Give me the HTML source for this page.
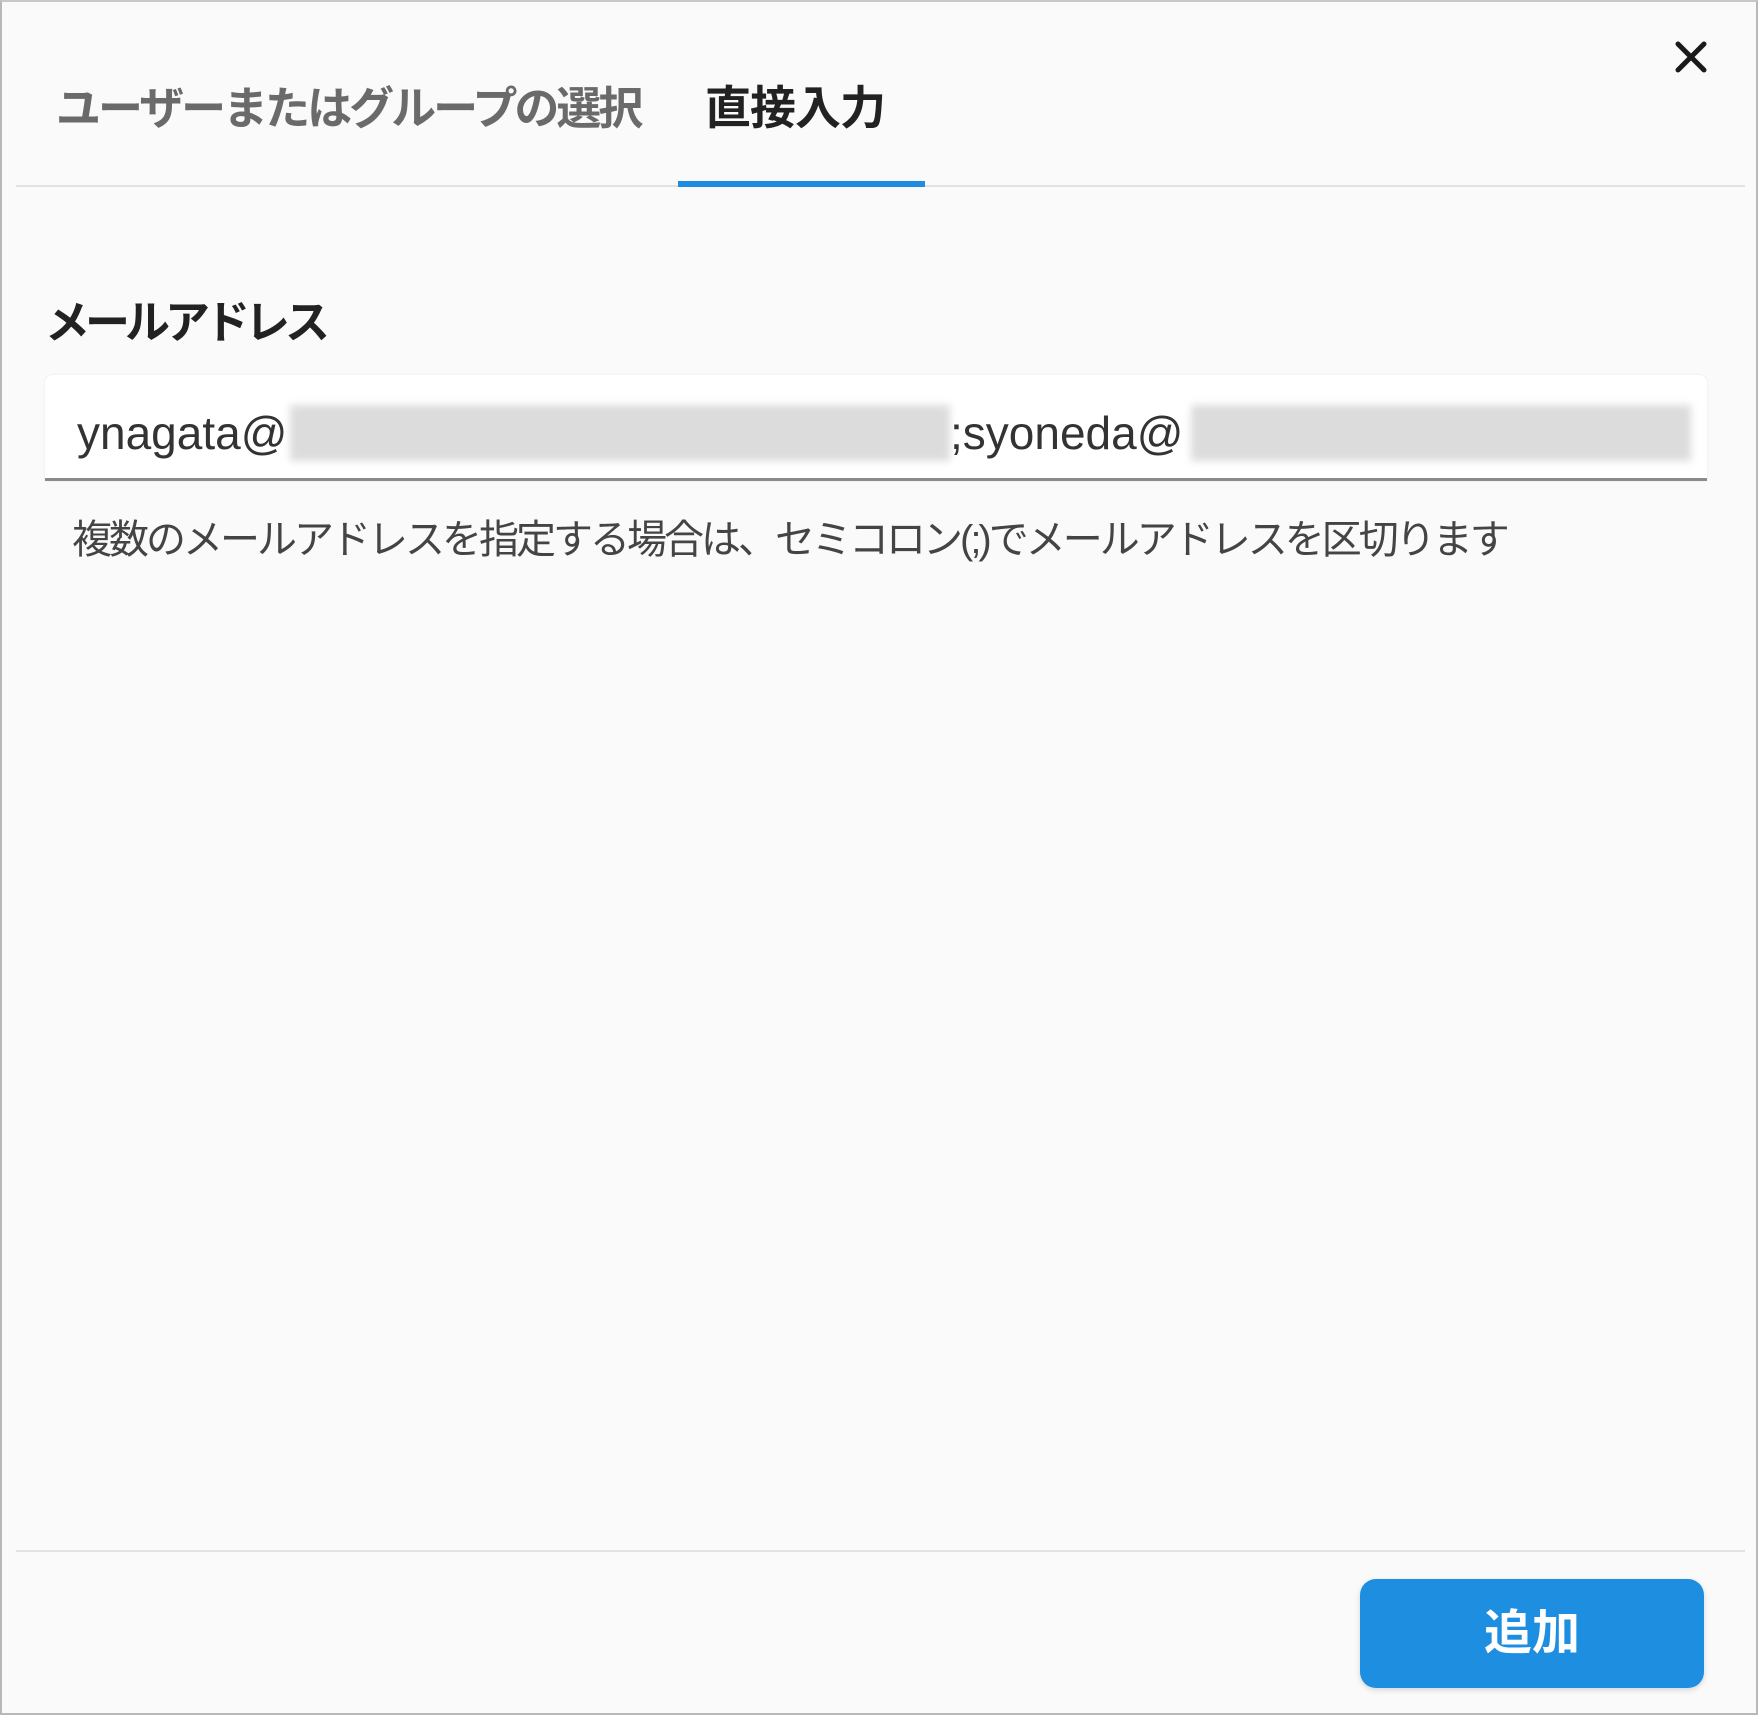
<!DOCTYPE html>
<html><head><meta charset="utf-8"><style>
*{margin:0;padding:0;box-sizing:border-box}
body{width:1758px;height:1715px;background:#fafafa;font-family:"Liberation Sans","Noto Sans CJK JP",sans-serif;position:relative;overflow:hidden}
.frame{position:absolute;left:0;top:0;width:1758px;height:1715px;border:2px solid #b8b8b8;border-top-color:#c8c8c8}
.abs{position:absolute;white-space:nowrap}
.t1{left:56px;top:72px;font-size:45px;font-weight:bold;color:#6a6a6a;letter-spacing:-3px}
.t2{left:705px;top:72px;font-size:46px;font-weight:bold;color:#222;letter-spacing:-1px}
.sep{left:16px;top:185px;width:1729px;height:2px;background:#e2e2e2}
.ind{left:678px;top:181px;width:247px;height:6px;background:#1e8ce0}
.lbl{left:45px;top:286px;font-size:45px;font-weight:bold;color:#222;letter-spacing:-5px}
.inp{left:45px;top:375px;width:1662px;height:106px;background:#fff;border-radius:8px 8px 0 0;border-bottom:3px solid #8a8a8a;box-shadow:0 0 2px #e6e6e6}
.txt{left:77px;top:406px;font-size:46px;color:#333;line-height:54px}
.blur{background:#dcdcdc;filter:blur(4px)}
.help{left:72px;top:507px;font-size:40px;color:#444;letter-spacing:-3px}
.fsep{left:16px;top:1550px;width:1729px;height:2px;background:#e2e2e2}
.btn{left:1360px;top:1579px;width:344px;height:109px;background:#1e8fe0;border-radius:16px;box-shadow:0 2px 6px rgba(0,0,0,.15);color:#fff;font-size:48px;font-weight:bold;text-align:center;line-height:109px}
</style></head><body>
<div class="frame"></div>
<div class="abs t1">ユーザーまたはグループの選択</div>
<div class="abs t2">直接入力</div>
<svg class="abs" style="left:1674px;top:40px" width="34" height="34" viewBox="0 0 34 34"><path d="M4 4L30 30M30 4L4 30" stroke="#1a1a1a" stroke-width="5" stroke-linecap="round"/></svg>
<div class="abs sep"></div>
<div class="abs ind"></div>
<div class="abs lbl">メールアドレス</div>
<div class="abs inp"></div>
<div class="abs blur" style="left:290px;top:405px;width:660px;height:56px"></div>
<div class="abs blur" style="left:1191px;top:405px;width:500px;height:56px"></div>
<div class="abs txt">ynagata@</div>
<div class="abs txt" style="left:950px">;syoneda@</div>
<div class="abs help">複数のメールアドレスを指定する場合は、セミコロン(;)でメールアドレスを区切ります</div>
<div class="abs fsep"></div>
<div class="abs btn">追加</div>
</body></html>
